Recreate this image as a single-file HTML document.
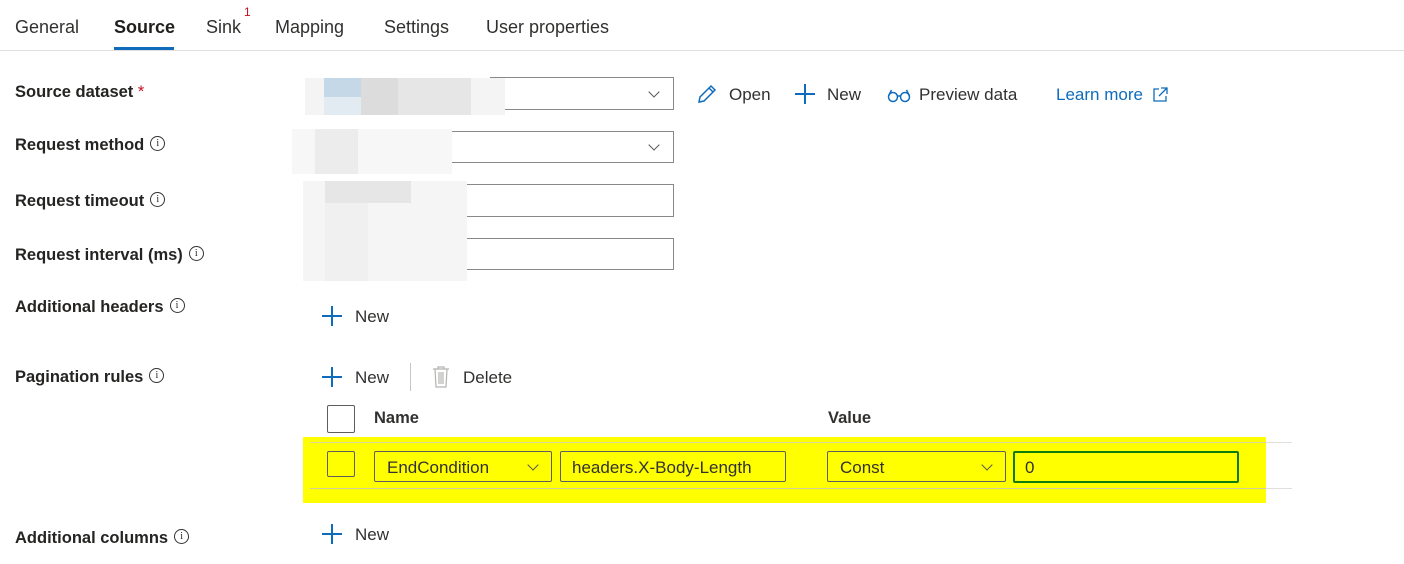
<!DOCTYPE html>
<html><head><meta charset="utf-8"><style>
*{box-sizing:border-box;margin:0;padding:0}
body{width:1404px;height:564px;background:#fff;font-family:"Liberation Sans",sans-serif;color:#323130;position:relative;overflow:hidden;font-size:17px}
.a{position:absolute;white-space:nowrap}
.tab{top:17px;font-size:18px;color:#323130}
.lbl{font-weight:bold;font-size:16.5px;color:#252423}
.info{display:inline-block;width:15px;height:15px;border:1px solid #333;border-radius:50%;font-size:10px;text-align:center;line-height:13px;font-weight:normal;vertical-align:4px;margin-left:6px;font-family:"Liberation Serif",serif}
.box{position:absolute;border:1px solid #8a8886;background:#fff}
.chev{position:absolute;width:8px;height:8px;border-right:1.3px solid #555;border-bottom:1.3px solid #555;transform:rotate(45deg)}
.plus{position:absolute;width:20px;height:20px}
.plus:before{content:"";position:absolute;left:9px;top:0;width:2px;height:20px;background:#0f6cbd}
.plus:after{content:"";position:absolute;left:0;top:9px;width:20px;height:2px;background:#0f6cbd}
.blk{position:absolute}
</style></head><body>
<div class="a tab" style="left:15px">General</div>
<div class="a tab" style="left:114px;font-weight:bold;color:#201f1e">Source</div>
<div class="a" style="left:114px;top:47px;width:60px;height:3px;background:#0f6cbd"></div>
<div class="a tab" style="left:206px">Sink</div>
<div class="a" style="left:244px;top:5px;font-size:12px;color:#c50f1f">1</div>
<div class="a tab" style="left:275px">Mapping</div>
<div class="a tab" style="left:384px">Settings</div>
<div class="a tab" style="left:486px">User properties</div>
<div class="a" style="left:0;top:50px;width:1404px;height:1px;background:#e1dfdd"></div>

<div class="a lbl" style="left:15px;top:83px">Source dataset <span style="color:#c50f1f;font-weight:normal">*</span></div>
<div class="a lbl" style="left:15px;top:136px">Request method<span class="info">i</span></div>
<div class="a lbl" style="left:15px;top:192px">Request timeout<span class="info">i</span></div>
<div class="a lbl" style="left:15px;top:246px">Request interval (ms)<span class="info">i</span></div>
<div class="a lbl" style="left:15px;top:298px">Additional headers<span class="info">i</span></div>
<div class="a lbl" style="left:15px;top:368px">Pagination rules<span class="info">i</span></div>
<div class="a lbl" style="left:15px;top:529px">Additional columns<span class="info">i</span></div>

<div class="box" style="left:490px;top:77px;width:184px;height:33px"></div>
<div class="chev" style="left:650px;top:88px"></div>
<div class="blk" style="left:305px;top:78px;width:200px;height:37px;background:#f4f4f4"></div>
<div class="blk" style="left:324px;top:78px;width:37px;height:19px;background:#c5d8e8"></div>
<div class="blk" style="left:324px;top:97px;width:37px;height:18px;background:#e3ebf2"></div>
<div class="blk" style="left:361px;top:78px;width:110px;height:37px;background:#e6e6e6"></div>
<div class="blk" style="left:361px;top:78px;width:37px;height:37px;background:#dcdcdc"></div>

<div class="box" style="left:440px;top:131px;width:234px;height:32px"></div>
<div class="chev" style="left:650px;top:141px"></div>
<div class="blk" style="left:292px;top:129px;width:160px;height:45px;background:#f7f7f7"></div>
<div class="blk" style="left:315px;top:129px;width:43px;height:45px;background:#ececec"></div>

<div class="box" style="left:450px;top:184px;width:224px;height:33px"></div>
<div class="box" style="left:450px;top:238px;width:224px;height:32px"></div>
<div class="blk" style="left:303px;top:181px;width:164px;height:100px;background:#f5f5f5"></div>
<div class="blk" style="left:325px;top:181px;width:86px;height:22px;background:#e6e6e6"></div>
<div class="blk" style="left:325px;top:203px;width:43px;height:78px;background:#f0f0f0"></div>

<svg class="a" style="left:696px;top:83px" width="22" height="22" viewBox="0 0 22 22"><path d="M3 19l1-5L15 3l4 4L8 18z M13 5l4 4" fill="none" stroke="#0f6cbd" stroke-width="1.5"/></svg>
<div class="a" style="left:729px;top:85px">Open</div>
<div class="plus" style="left:795px;top:84px"></div>
<div class="a" style="left:827px;top:85px">New</div>
<svg class="a" style="left:886px;top:86px" width="26" height="18" viewBox="0 0 26 18"><circle cx="7" cy="11" r="4.5" fill="none" stroke="#0f6cbd" stroke-width="1.5"/><circle cx="19" cy="11" r="4.5" fill="none" stroke="#0f6cbd" stroke-width="1.5"/><path d="M11.5 10h3M2.5 10l3-6M23.5 10l-3-6" fill="none" stroke="#0f6cbd" stroke-width="1.5"/></svg>
<div class="a" style="left:919px;top:85px">Preview data</div>
<div class="a" style="left:1056px;top:85px;color:#0f6cbd">Learn more</div>
<svg class="a" style="left:1152px;top:87px" width="16" height="16" viewBox="0 0 16 16"><path d="M7 2H2v12h12V9M9 1h6v6M15 1L7 9" fill="none" stroke="#0f6cbd" stroke-width="1.3"/></svg>

<div class="plus" style="left:322px;top:306px"></div>
<div class="a" style="left:355px;top:307px">New</div>
<div class="plus" style="left:322px;top:367px"></div>
<div class="a" style="left:355px;top:368px">New</div>
<div class="a" style="left:410px;top:363px;width:1px;height:28px;background:#c8c6c4"></div>
<svg class="a" style="left:431px;top:366px" width="20" height="22" viewBox="0 0 20 22"><path d="M2 3h16M7 3V1h6v2M4 3l1 18h10l1-18M8 6v12M10 6v12M12 6v12" fill="none" stroke="#b5b3b1" stroke-width="1.2"/></svg>
<div class="a" style="left:463px;top:368px">Delete</div>

<div class="a" style="left:327px;top:405px;width:28px;height:28px;border:1px solid #605e5c;border-radius:2px"></div>
<div class="a" style="left:374px;top:409px;font-weight:bold;font-size:16.5px">Name</div>
<div class="a" style="left:828px;top:409px;font-weight:bold;font-size:16.5px">Value</div>
<div class="a" style="left:310px;top:442px;width:982px;height:1px;background:#e1dfdd"></div>

<div class="a" style="left:303px;top:437px;width:963px;height:66px;background:#ffff00"></div>
<div class="a" style="left:310px;top:442px;width:982px;height:1px;background:#d8d8a0"></div>
<div class="a" style="left:310px;top:488px;width:982px;height:1px;background:#cfcfa0"></div>
<div class="a" style="left:1266px;top:488px;width:26px;height:1px;background:#e1dfdd"></div>
<div class="a" style="left:1266px;top:442px;width:26px;height:1px;background:#e1dfdd"></div>
<div class="a" style="left:327px;top:451px;width:28px;height:26px;border:1px solid #605e5c;border-radius:2px"></div>
<div class="a" style="left:374px;top:451px;width:178px;height:31px;border:1px solid #605e5c;border-radius:2px"></div>
<div class="a" style="left:387px;top:458px">EndCondition</div>
<div class="chev" style="left:529px;top:461px"></div>
<div class="a" style="left:560px;top:451px;width:226px;height:31px;border:1px solid #605e5c;border-radius:2px"></div>
<div class="a" style="left:572px;top:458px">headers.X-Body-Length</div>
<div class="a" style="left:827px;top:451px;width:179px;height:31px;border:1px solid #605e5c;border-radius:2px"></div>
<div class="a" style="left:840px;top:458px">Const</div>
<div class="chev" style="left:983px;top:461px"></div>
<div class="a" style="left:1013px;top:451px;width:226px;height:32px;border:2px solid #107c10;border-radius:2px"></div>
<div class="a" style="left:1025px;top:458px">0</div>

<div class="plus" style="left:322px;top:524px"></div>
<div class="a" style="left:355px;top:525px">New</div>
</body></html>
